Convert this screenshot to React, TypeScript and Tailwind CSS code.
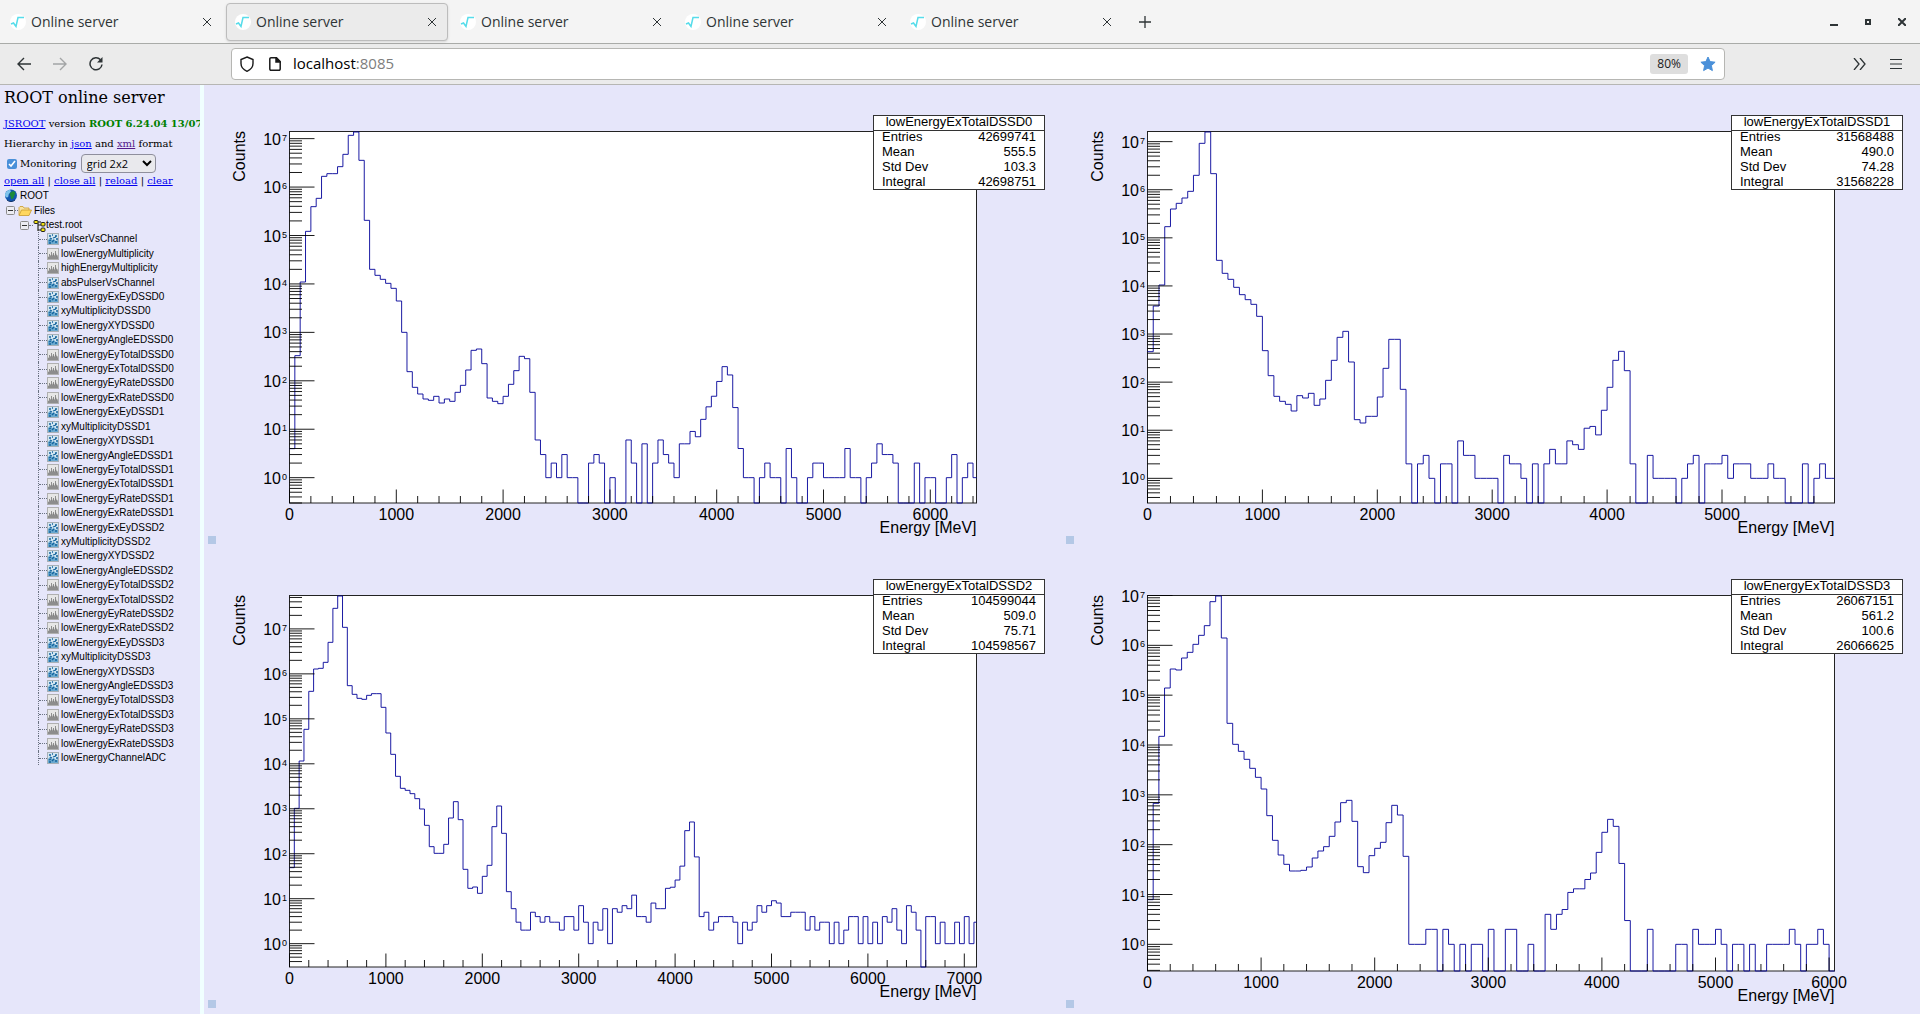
import type { ReactNode } from "react";

type Hist = {
  name: string;
  stats: [string, string][];
  // pixels per 1000 MeV
  kilo: number;
  // y of 10^0, decade height and frame bottom, all in thirds of a pixel below `top`
  one: number;
  decade: number;
  bottom: number;
  top: number;
  left: number;
  frameTop: number;
  frameBottom: number;
  maxX: number;
  // bin tops of the strong part of the spectrum, then plain counts; 50 MeV bins
  levels: number[];
  counts: number[];
};

const HISTS: Hist[] = [
  {
    name: "lowEnergyExTotalDSSD0",
    stats: [["Entries", "42699741"], ["Mean", "555.5"], ["Std Dev", "103.3"], ["Integral", "42698751"]],
    kilo: 106.8, one: 1103, decade: 145.3, bottom: 1179, top: 25, left: 85.5, frameTop: 46.5, frameBottom: 418, maxX: 6000,
    levels: [
      1016, 737, 516, 364, 290, 265, 199, 191, 191, 170, 133, 76, 66, 151, 331, 478, 496, 508, 520, 535, 573, 667, 785,
      832, 852, 867, 871, 859, 879, 867, 874, 847, 826, 780, 721, 717, 761, 864, 874, 881, 859, 823, 782, 739, 746, 847,
    ],
    counts: [
      6, 3, 1, 2, 1, 3, 1, 1, 0, 0, 2, 3, 2, 0, 1, 0, 0, 6, 2, 0, 5, 0, 2, 6, 3, 2, 1, 5, 5, 9, 7, 16, 29, 48, 97, 196,
      132, 28, 4, 1, 1, 0, 1, 2, 1, 1, 0, 4, 1, 0, 0, 1, 2, 2, 1, 1, 1, 1, 4, 1, 1, 0, 1, 2, 5, 3, 3, 2, 0, 0, 0, 2, 0,
      1, 1, 0, 0, 1, 3, 0, 1, 2, 1,
    ],
  },
  {
    name: "lowEnergyExTotalDSSD1",
    stats: [["Entries", "31568488"], ["Mean", "490.0"], ["Std Dev", "74.28"], ["Integral", "31568228"]],
    kilo: 114.9, one: 1105, decade: 144.3, bottom: 1179, top: 25, left: 85.5, frameTop: 46.5, frameBottom: 418, maxX: 5000,
    levels: [
      725, 588, 525, 350, 297, 280, 264, 244, 196, 100, 66, 191, 451, 490, 508, 532, 554, 569, 583, 619, 722, 797, 859,
      874, 883, 903, 857, 864, 850, 886, 867, 811, 751, 682, 664, 756, 929, 939, 919, 919, 861, 775, 688, 688, 838,
    ],
    counts: [
      2, 0, 2, 3, 1, 0, 2, 2, 0, 6, 3, 3, 1, 1, 1, 1, 0, 3, 2, 2, 1, 0, 2, 0, 2, 4, 2, 2, 6, 5, 4, 11, 12, 8, 26, 78,
      284, 437, 173, 2, 0, 0, 3, 1, 1, 1, 1, 0, 1, 2, 3, 0, 2, 2, 2, 3, 1, 2, 2, 2, 1, 1, 1, 2, 1, 1, 0, 0, 0, 2, 0, 1,
      2, 1, 1,
    ],
  },
  {
    name: "lowEnergyExTotalDSSD2",
    stats: [["Entries", "104599044"], ["Mean", "509.0"], ["Std Dev", "75.71"], ["Integral", "104598567"]],
    kilo: 96.4, one: 1121, decade: 134.9, bottom: 1191, top: 21, left: 85.5, frameTop: 46.5, frameBottom: 418, maxX: 7000,
    levels: [
      893, 715, 573, 478, 364, 297, 295, 277, 217, 115, 78, 172, 347, 373, 385, 388, 376, 371, 371, 412, 489, 553, 619,
      655, 661, 671, 686, 717, 766, 830, 850, 850, 823, 744, 695, 749, 898, 955, 951, 970, 919, 886, 770, 708, 790, 965,
    ],
    counts: [
      6, 3, 2, 2, 5, 4, 3, 4, 3, 3, 2, 4, 4, 2, 7, 3, 1, 3, 2, 6, 1, 6, 5, 7, 6, 12, 4, 4, 3, 8, 6, 6, 17, 18, 26, 53,
      326, 508, 85, 4, 5, 2, 3, 4, 4, 4, 3, 1, 3, 2, 3, 7, 5, 7, 9, 8, 4, 4, 5, 5, 5, 2, 4, 2, 3, 3, 1, 3, 1, 2, 4, 4,
      1, 4, 1, 3, 1, 4, 3, 6, 2, 1, 7, 5, 2, 0, 4, 4, 1, 3, 1, 1, 3, 1, 4, 1, 3,
    ],
  },
  {
    name: "lowEnergyExTotalDSSD3",
    stats: [["Entries", "26067151"], ["Mean", "561.2"], ["Std Dev", "100.6"], ["Integral", "26066625"]],
    kilo: 113.6, one: 1123, decade: 149.5, bottom: 1203, top: 21, left: 85.5, frameTop: 46.5, frameBottom: 422, maxX: 6000,
    levels: [
      989, 700, 499, 354, 297, 300, 264, 247, 223, 196, 167, 95, 78, 204, 460, 523, 544, 568, 595, 622, 657, 737, 811,
      855, 883, 903, 903, 901, 891, 864, 843, 830, 799, 756, 698, 691, 754, 890, 908, 857, 835, 817, 758, 706, 735, 859,
    ],
    counts: [
      1, 1, 1, 2, 2, 0, 2, 1, 0, 1, 0, 1, 1, 0, 2, 0, 0, 2, 2, 0, 0, 1, 0, 0, 4, 2, 4, 5, 11, 13, 13, 20, 27, 70, 177,
      322, 233, 42, 3, 0, 0, 0, 2, 0, 0, 0, 0, 1, 1, 0, 2, 1, 1, 1, 2, 1, 0, 1, 1, 0, 1, 0, 0, 1, 1, 1, 1, 2, 1, 0, 1,
      1, 2, 1, 0,
    ],
  },
];

const RIGHT = 772.5;

function curve(h: Hist) {
  const all = [
    ...h.levels,
    ...h.counts.map((n) => (n ? h.one - h.decade * Math.log10(n) : h.bottom)),
  ];
  let d = `M${h.left} ${h.top + all[0] / 3}`;
  all.forEach((v, i) => {
    const x = Math.min(RIGHT, h.left + ((i + 1) * h.kilo) / 20);
    d += `V${h.top + v / 3}H${x}`;
  });
  return d;
}

function axes(h: Hist) {
  let d = "";
  for (let p = -1; p <= 7; p++) {
    for (let m = 1; m < 10; m++) {
      const y = h.top + (h.one - h.decade * (p + Math.log10(m))) / 3;
      if (y < h.frameTop - 1 || y > h.frameBottom) continue;
      d += `M${h.left} ${y}h${m === 1 ? 25 : 12.5}`;
    }
  }
  for (let e = 0; ; e += 200) {
    const x = h.left + (e * h.kilo) / 1000;
    if (x > RIGHT) break;
    d += `M${x} ${h.frameBottom}v${e % 1000 === 0 ? -13.5 : -7}`;
  }
  return d;
}

function Histogram({ h }: { h: Hist }) {
  const thousands = Array.from({ length: h.maxX / 1000 + 1 }, (_, i) => i);
  return (
    <svg
      viewBox="0 0 858 464"
      className="block w-full font-['Liberation_Sans',Arial,sans-serif]"
      role="img"
      aria-label={h.name}
    >
      <rect x={h.left} y={h.frameTop} width={RIGHT - h.left} height={h.frameBottom - h.frameTop} fill="white" stroke="#222" />
      <path d={curve(h)} fill="none" stroke="#000099" strokeWidth="0.9" />
      <path d={axes(h)} fill="none" stroke="black" strokeWidth="0.9" />

      {Array.from({ length: 8 }, (_, p) => {
        const y = h.top + (h.one - h.decade * p) / 3;
        return (
          <g key={p}>
            <text x="77" y={y + 6} fontSize="16" textAnchor="end">10</text>
            <text x="78" y={y + 2} fontSize="9">{p}</text>
          </g>
        );
      })}
      {thousands.map((k) => (
        <text key={k} x={h.left + k * h.kilo} y={h.frameBottom + 17} fontSize="16" textAnchor="middle">
          {k * 1000}
        </text>
      ))}
      <text x={RIGHT} y={h.frameBottom + 30} fontSize="16" textAnchor="end">Energy [MeV]</text>
      <text transform="translate(41 46) rotate(-90)" fontSize="16" textAnchor="end">Counts</text>

      <rect x="669.5" y="30.5" width="171" height="74" fill="white" stroke="#333" />
      <path d="M669.5 45.5h171" stroke="#333" />
      <text x="755" y="41" fontSize="13" textAnchor="middle">{h.name}</text>
      {h.stats.map(([label, value], i) => (
        <g key={label} fontSize="13">
          <text x="678" y={56 + i * 15}>{label}</text>
          <text x="832" y={56 + i * 15} textAnchor="end">{value}</text>
        </g>
      ))}
      <rect x="4" y="451" width="8" height="8" fill="#b4c8e6" />
    </svg>
  );
}

type Leaf = { label: string; kind: "h1" | "h2" };

const LEAVES: Leaf[] = [
  { label: "pulserVsChannel", kind: "h2" },
  { label: "lowEnergyMultiplicity", kind: "h1" },
  { label: "highEnergyMultiplicity", kind: "h1" },
  { label: "absPulserVsChannel", kind: "h2" },
  ...[0, 1, 2, 3].flatMap((n): Leaf[] => [
    { label: `lowEnergyExEyDSSD${n}`, kind: "h2" },
    { label: `xyMultiplicityDSSD${n}`, kind: "h2" },
    { label: `lowEnergyXYDSSD${n}`, kind: "h2" },
    { label: `lowEnergyAngleEDSSD${n}`, kind: "h2" },
    { label: `lowEnergyEyTotalDSSD${n}`, kind: "h1" },
    { label: `lowEnergyExTotalDSSD${n}`, kind: "h1" },
    { label: `lowEnergyEyRateDSSD${n}`, kind: "h1" },
    { label: `lowEnergyExRateDSSD${n}`, kind: "h1" },
  ]),
  { label: "lowEnergyChannelADC", kind: "h2" },
];

function LeafIcon({ kind }: { kind: Leaf["kind"] }) {
  return kind === "h2" ? (
    <svg viewBox="0 0 12 12" className="size-3 shrink-0">
      <rect x="0.5" y="0.5" width="11" height="11" fill="#d3e6f2" stroke="#a8b0b6" />
      <path d="M1 7l2-2 2 2 2-1 2 2 2-1v4H1z" fill="#6aa9cf" />
      <path d="M2 3h2M5 2h1M8 3h2M3 5l2 1M6 5l3-1M2 8l2-1M5 9l2-2M8 9h2M2 10h2M9 6h2" stroke="#14639c" strokeWidth="1.3" />
    </svg>
  ) : (
    <svg viewBox="0 0 12 12" className="size-3 shrink-0">
      <rect x="0.5" y="0.5" width="11" height="11" fill="#e6e6e6" stroke="#b0b0b0" />
      <path d="M1 11V9l1.5-1L4 7l1 1 1-2 1 2 2-3 1 3 1 1v2z" fill="#8d8d8d" />
      <path d="M2.5 8V6M4.500 8V4M6.500 8V5M8.500 7V3M10 9V7" stroke="#777" strokeWidth="0.8" />
    </svg>
  );
}

function Minus() {
  return (
    <svg viewBox="0 0 9 9" className="size-[9px] shrink-0">
      <rect x="0.5" y="0.5" width="8" height="8" rx="1" fill="#ececf2" stroke="#8c8c8c" />
      <path d="M2 4.5h5" stroke="#333" />
    </svg>
  );
}

function Globe() {
  return (
    <svg viewBox="0 0 14 14" className="size-[14px] shrink-0">
      <circle cx="7" cy="6.5" r="6" fill="#1257b0" />
      <path d="M1 6C1 3 4 1 6 1c2 1 0 3-1 4s0 2-1 3-3 0-3-2z" fill="#7fc3ec" />
      <path d="M6 4c2-2 4-2 5-1 1 2-1 3-1 5-1 2-3 3-3 1s-2-3-1-5z" fill="#1c8a3c" />
      <path d="M3 11c2 2 6 2 8 0" fill="none" stroke="#0a2c63" />
    </svg>
  );
}

function Folder() {
  return (
    <svg viewBox="0 0 14 12" className="h-3 w-[14px] shrink-0">
      <path d="M1 10V2.500L2 1.500h3l1 1.500h5V5" fill="#f8e3a0" stroke="#c99a2c" strokeWidth="0.8" />
      <path d="M1 10.500L3.500 5h10L11 10.500z" fill="#ffd75e" stroke="#c99a2c" strokeWidth="0.8" />
    </svg>
  );
}

function FileIcon() {
  return (
    <svg viewBox="0 0 13 13" className="h-[13px] w-[13px] shrink-0">
      <path d="M4 3h4M5 4v8" fill="none" stroke="#777" strokeWidth="2" />
      <path d="M5 6h3M5 11h3" stroke="#222" />
      <rect x="1" y="1.500" width="4" height="3" rx="1" fill="#f0e010" stroke="#222" />
      <rect x="8" y="3.500" width="4" height="3.500" rx="1" fill="#f0e010" stroke="#222" />
      <rect x="8" y="9" width="4" height="3.500" rx="1" fill="#f0e010" stroke="#222" />
    </svg>
  );
}

function Link({ children, visited }: { children: ReactNode; visited?: boolean }) {
  return (
    <a href="#" className={`underline ${visited ? "text-[#551a8b]" : "text-[#0000ee]"}`}>
      {children}
    </a>
  );
}

function Sidebar() {
  return (
    <aside className="w-[200px] shrink-0 overflow-hidden whitespace-nowrap pl-1 font-['DejaVu_Serif',serif] text-[10px] leading-4 text-black">
      <h1 className="pt-px text-[16px] leading-6">ROOT online server</h1>
      <p className="mt-[6px]">
        <Link>JSROOT</Link> version <b className="text-[#008000]">ROOT 6.24.04 13/07/2021</b>
      </p>
      <p className="mt-1">
        Hierarchy in <Link>json</Link> and <Link visited>xml</Link> format
      </p>
      <div className="mt-[2px] flex items-center">
        <input
          id="monitoring"
          type="checkbox"
          defaultChecked
          className="ml-[3px] size-[10px] accent-[#4a90d9]"
        />
        <label htmlFor="monitoring" className="ml-[3px]">Monitoring</label>
        <select
          aria-label="Layout"
          defaultValue="grid 2x2"
          className="ml-1 h-[19px] w-[75px] rounded border border-[#8f8f9d] bg-[#e9e9ed] pl-px font-['Open_Sans',sans-serif] text-[11px] leading-4"
        >
          <option>grid 2x2</option>
        </select>
      </div>
      <p>
        <Link>open all</Link> | <Link>close all</Link> | <Link>reload</Link> | <Link>clear</Link>
      </p>

      <ul className="flex h-[576px] flex-col font-['Liberation_Sans',Arial,sans-serif] leading-[14px]">
        <li className="flex flex-1 items-center gap-[2px]">
          <Globe />
          ROOT
        </li>
        <li className="flex flex-1 items-center pl-[2px]">
          <Minus />
          <span className="w-[3px] border-t border-dotted border-gray-500" />
          <Folder />
          <span className="ml-[2px]">Files</span>
        </li>
        <li className="flex flex-1 items-center pl-4">
          <Minus />
          <span className="w-1 border-t border-dotted border-gray-500" />
          <FileIcon />
          test.root
        </li>
        {LEAVES.map((leaf) => (
          <li key={leaf.label} className="ml-[34px] flex flex-1 items-center border-l border-dotted border-gray-500">
            <span className="w-2 border-t border-dotted border-gray-500" />
            <LeafIcon kind={leaf.kind} />
            <span className="ml-[2px]">{leaf.label}</span>
          </li>
        ))}
      </ul>
    </aside>
  );
}

function Tab({ active }: { active?: boolean }) {
  return (
    <div
      className={`flex h-[38px] w-[222px] items-center rounded border pl-2 pr-[11px] ${
        active ? "border-[#bcbcbc] bg-[#ebebeb] shadow-sm" : "border-transparent"
      }`}
    >
      <svg viewBox="0 0 16 16" className="size-4 shrink-0">
        <circle cx="8" cy="8" r="8" fill="white" />
        <path d="M1 10l2.500-1 2.500 3.500L8 3.500h6" fill="none" stroke="#56dcea" strokeWidth="1.500" />
      </svg>
      <span className="ml-[5px] flex-1">Online server</span>
      <button aria-label="Close tab">
        <svg viewBox="0 0 8 8" className="size-2" stroke="#2e3436" fill="none">
          <path d="M0 0l8 8M8 0L0 8" />
        </svg>
      </button>
    </div>
  );
}

function BrowserChrome() {
  return (
    <header className="font-['Open_Sans',sans-serif] text-[14px] text-[#2e3436]">
      <div className="flex h-11 items-center border-b border-[#a9aba8] bg-[#f4f4f4] pl-px">
        <div className="flex gap-[3px]">
          {[0, 1, 2, 3, 4].map((i) => (
            <Tab key={i} active={i === 1} />
          ))}
        </div>
        <button aria-label="New tab" className="ml-4">
          <svg viewBox="0 0 12 12" className="size-3" stroke="#2e3436" fill="none">
            <path d="M6 0v12M0 6h12" strokeWidth="1.300" />
          </svg>
        </button>
        <div className="ml-auto mr-[14px] flex gap-[26px]">
          <button aria-label="Minimize">
            <svg viewBox="0 0 8 8" className="size-2"><path d="M0 7h8" stroke="#2e3436" strokeWidth="2" /></svg>
          </button>
          <button aria-label="Maximize">
            <svg viewBox="0 0 8 8" className="size-2"><rect x="2" y="2" width="4" height="4" fill="none" stroke="#2e3436" strokeWidth="2" /></svg>
          </button>
          <button aria-label="Close">
            <svg viewBox="0 0 8 8" className="size-2"><path d="M0 0l8 8M8 0L0 8" stroke="#2e3436" strokeWidth="2" /></svg>
          </button>
        </div>
      </div>

      <div className="flex h-[41px] items-center border-b border-[#b6b6b3] bg-[#ebebeb] pl-[17px] pr-[18px]">
        <div className="flex w-[214px] items-center gap-[22px]">
          <button aria-label="Back">
            <svg viewBox="0 0 14 14" className="size-[14px]" fill="none" stroke="#2e3436" strokeWidth="1.400">
              <path d="M14 7H1M7 1L1 7l6 6" />
            </svg>
          </button>
          <button aria-label="Forward" disabled>
            <svg viewBox="0 0 14 14" className="size-[14px]" fill="none" stroke="#a3a5a6" strokeWidth="1.400">
              <path d="M0 7h13M7 1l6 6-6 6" />
            </svg>
          </button>
          <button aria-label="Reload">
            <svg viewBox="0 0 14 14" className="size-[14px]" fill="none" stroke="#2e3436" strokeWidth="1.500">
              <path d="M11.500 2.800A6 6 0 1 0 13 7.500" />
              <path d="M13.500 0v5.500H8z" fill="#2e3436" stroke="none" />
            </svg>
          </button>
        </div>
        <div className="flex h-8 flex-1 items-center rounded border border-[#b6b6b3] bg-white pl-2 pr-2">
          <svg viewBox="0 0 14 16" className="h-4 w-[14px]" fill="none" stroke="#1a1a1a" strokeWidth="1.400">
            <path d="M7 1l6 2.500v4C13 11 10 14 7 15.300 4 14 1 11 1 7.500v-4z" />
          </svg>
          <svg viewBox="0 0 12 14" className="ml-[15px] h-[14px] w-3" fill="none" stroke="#1a1a1a" strokeWidth="1.500">
            <path d="M2 .8h5.500L11.200 4.500V12a1.200 1.200 0 0 1-1.200 1.200H2A1.200 1.200 0 0 1 .8 12V2A1.200 1.200 0 0 1 2 .8z" />
            <path d="M7 1v4h4z" fill="#1a1a1a" />
          </svg>
          <div className="ml-3 flex-1 pb-px text-[15px]">
            <span className="text-black">localhost</span>
            <span className="text-[#7d7d7d]">:8085</span>
          </div>
          <button className="h-5 rounded-[3px] bg-[#dedede] px-[7px] text-[12px] leading-5 text-[#1a1a1a]">80%</button>
          <button aria-label="Bookmark" className="ml-3">
            <svg viewBox="0 0 16 16" className="size-4" fill="#4a90d9" stroke="#4a90d9" strokeLinejoin="round">
              <path d="M8 1l2.100 4.600 5 .6-3.700 3.400 1 5L8 12.100l-4.400 2.500 1-5L.9 6.200l5-.6z" />
            </svg>
          </button>
        </div>
        <button aria-label="More tools" className="ml-[128px]">
          <svg viewBox="0 0 13 12" className="h-3 w-[13px]" fill="none" stroke="#2e3436" strokeWidth="1.300">
            <path d="M1 0l5 6-5 6M7 0l5 6-5 6" />
          </svg>
        </button>
        <button aria-label="Menu" className="ml-6">
          <svg viewBox="0 0 12 10" className="h-[10px] w-3" stroke="#2e3436">
            <path d="M0 .5h12M0 5h12M0 9.500h12" />
          </svg>
        </button>
      </div>
    </header>
  );
}

export default function App() {
  return (
    <div className="flex min-h-screen flex-col bg-[#e6e6fa]">
      <BrowserChrome />
      <div className="flex flex-1">
        <Sidebar />
        <div className="w-1 shrink-0 bg-[#f0ffff]" />
        <main className="grid flex-1 grid-cols-2 content-start">
          {HISTS.map((h) => (
            <Histogram key={h.name} h={h} />
          ))}
        </main>
      </div>
    </div>
  );
}
